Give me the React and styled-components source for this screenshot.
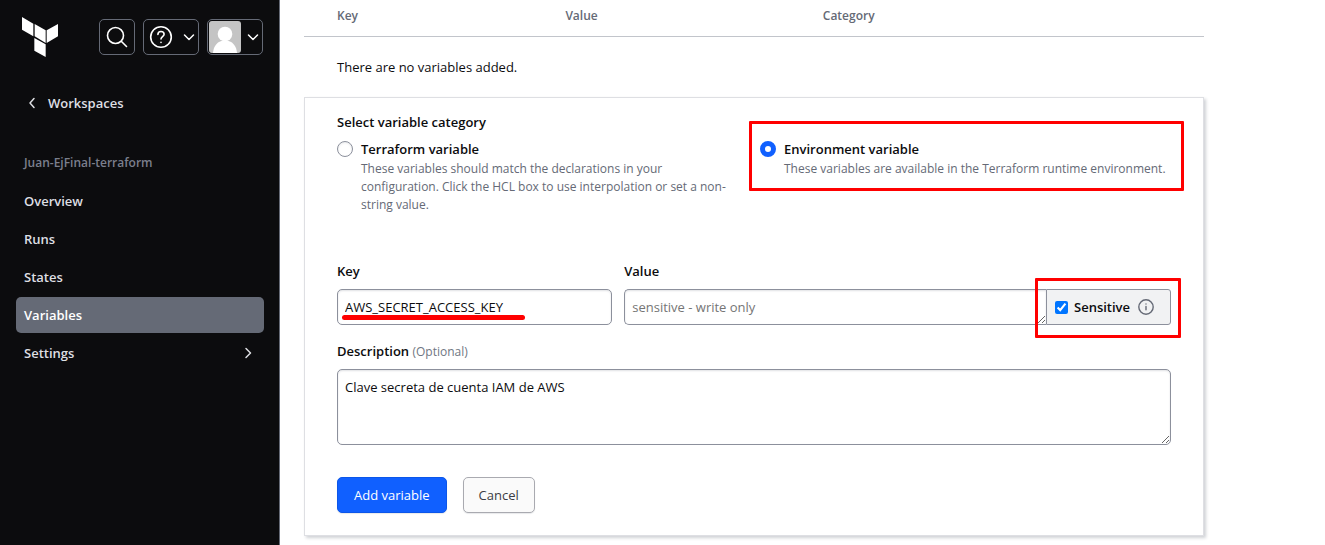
import React, { useState } from 'react';
import styled, { createGlobalStyle, css } from 'styled-components';

const GlobalStyle = createGlobalStyle`
  *, *::before, *::after { box-sizing: border-box; }
  body {
    margin: 0;
    background: #fff;
    color: #0c0c0e;
    font: 400 13px/20px "Open Sans", "Noto Sans", sans-serif;
  }
  button, input, textarea { font: inherit; color: inherit; }
`;

const Page = styled.div`
  display: flex;
  min-height: 100vh;
`;

const Sidebar = styled.aside`
  flex: none;
  width: 280px;
  padding: 17px 15px 17px 16px;
  border-right: 1px solid #656a76;
  background: #0c0c0e;
  color: #dedfe3;
`;

const SidebarHeader = styled.header`
  display: flex;
  align-items: center;
  gap: 8px;
  height: 40px;
  padding-right: 1px;
`;

const LogoLink = styled.a`
  display: flex;
  margin: 0 auto 0 6px;
`;

const HeaderButton = styled.button`
  display: flex;
  align-items: center;
  justify-content: space-between;
  width: ${({ $wide }) => ($wide ? 56 : 36)}px;
  height: 36px;
  padding: 0 ${({ $wide }) => ($wide ? 1 : 5)}px 0 ${({ $flush }) => ($flush ? 1 : 5)}px;
  border: 1px solid #656a76;
  border-radius: 5px;
  background: transparent;
  color: #fff;
`;

const BackLink = styled.a`
  display: flex;
  align-items: center;
  gap: 8px;
  height: 36px;
  margin-top: 28px;
  padding-left: 8px;
  color: inherit;
  font-weight: 600;
  text-decoration: none;
`;

const WorkspaceName = styled.div`
  margin: 32px 0 10px;
  padding-left: 8px;
  color: #7b7f8d;
  font-size: 12px;
  font-weight: 600;
`;

const Nav = styled.nav`
  display: flex;
  flex-direction: column;
  gap: 2px;
`;

const NavLink = styled.a`
  display: flex;
  align-items: center;
  justify-content: space-between;
  height: 36px;
  padding: 0 8px;
  border-radius: 5px;
  color: ${({ $active }) => ($active ? '#fff' : 'inherit')};
  background: ${({ $active }) => ($active ? '#656a76' : 'transparent')};
  font-weight: 600;
  text-decoration: none;
`;

const Main = styled.main`
  flex: 1;
  min-width: 0;
  padding: 0 24px 9px;
`;

const Content = styled.div`
  max-width: 900px;
`;

const VariablesTable = styled.table`
  width: 100%;
  border-collapse: collapse;
  table-layout: fixed;
`;

const HeadCell = styled.th`
  width: ${({ $width }) => $width};
  padding: 6px 0 10px ${({ $first }) => ($first ? 33 : 4)}px;
  border-bottom: 1px solid #c2c5cb;
  color: #656a76;
  font-size: 12px;
  font-weight: 600;
  text-align: left;
`;

const EmptyCell = styled.td`
  padding: 20px 33px;
`;

const Card = styled.form`
  padding: 14px 32px 22px;
  border: 1px solid #dedfe3;
  box-shadow: 2px 2px 3px rgba(101, 106, 118, 0.3);
`;

const CategoryGroup = styled.fieldset`
  display: grid;
  grid-template-columns: 1fr 1fr;
  column-gap: 12px;
  align-items: start;
  margin: 0 0 47px;
  padding: 0;
  border: 0;
`;

const Legend = styled.legend`
  margin-bottom: 7px;
  padding: 0;
  font-weight: 600;
`;

const Option = styled.label`
  position: relative;
  display: flex;
  gap: 8px;
  padding-right: ${({ $inset }) => ($inset ? 8 : 0)}px;
`;

const Radio = styled.input`
  appearance: none;
  flex: none;
  width: 16px;
  height: 16px;
  margin: 2px 0 0;
  border: 1px solid #8c909c;
  border-radius: 50%;
  background: #fff;
  box-shadow: inset 0 1px 2px rgba(101, 106, 118, 0.15);
  &:checked {
    border: 5px solid #1060ff;
    box-shadow: none;
  }
`;

const OptionTitle = styled.span`
  display: block;
  font-weight: 600;
`;

const OptionHelp = styled.span`
  display: block;
  margin-top: 1px;
  color: #656a76;
  font-size: 12px;
  line-height: 18px;
`;

const FieldRow = styled.div`
  display: grid;
  grid-template-columns: 33% 1fr;
  gap: 12px;
  margin-bottom: 16px;
`;

const Field = styled.div`
  position: relative;
  display: flex;
  flex-direction: column;
  gap: 8px;
  min-width: 0;
`;

const Label = styled.label`
  font-weight: 600;
`;

const Optional = styled.span`
  color: #6f7682;
  font-size: 12px;
  font-weight: 400;
  line-height: 16px;
`;

const control = css`
  display: block;
  width: 100%;
  margin: 0;
  padding: 7px;
  border: 1px solid #8c909c;
  border-radius: 5px;
  outline: 0;
  background: #fff;
  box-shadow: inset 0 1px 2px rgba(101, 106, 118, 0.2);
`;

const TextInput = styled.input`
  ${control}
  height: 36px;
`;

const TextArea = styled.textarea`
  ${control}
  height: ${({ $tall }) => ($tall ? 76 : 36)}px;
  ${({ $joined }) => $joined && 'border-right: 0; border-radius: 5px 0 0 5px; overflow: hidden;'}
  &::placeholder { color: #757575; }
`;

const InputGroup = styled.div`
  display: flex;
`;

const Addon = styled.div`
  position: relative;
  display: flex;
  flex: none;
  align-items: center;
  gap: 8px;
  width: 125px;
  height: 36px;
  padding-left: 8px;
  border: 1px solid #8c909c;
  border-radius: 0 3px 3px 0;
  background: #f1f2f3;
`;

const CheckLabel = styled.label`
  display: flex;
  align-items: center;
  gap: 6px;
  font-weight: 600;
`;

const Checkbox = styled.input`
  width: 13px;
  height: 13px;
  margin: 0;
  accent-color: #0075ff;
`;

const InfoButton = styled.button`
  display: flex;
  padding: 0;
  border: 0;
  background: none;
  color: #656a76;
`;

const Highlight = styled.span`
  position: absolute;
  inset: ${({ $inset }) => $inset};
  border: 3px solid #f00;
  border-radius: 1px;
  pointer-events: none;
`;

const Underline = styled.span`
  position: absolute;
  bottom: 5px;
  left: 5px;
  width: 183px;
  height: 5px;
  border-radius: 3px;
  background: #f00;
  pointer-events: none;
`;

const Actions = styled.div`
  display: flex;
  gap: 16px;
  margin-top: 32px;
`;

const Button = styled.button`
  height: 36px;
  padding: 0 ${({ $primary }) => ($primary ? 16 : 15)}px;
  border: 1px solid ${({ $primary }) => ($primary ? '#0c56e9' : '#a9aab0')};
  border-radius: 5px;
  background: ${({ $primary }) => ($primary ? '#1060ff' : '#fafafa')};
  color: ${({ $primary }) => ($primary ? '#fff' : '#3b3d45')};
  box-shadow: 0 1px 1px rgba(101, 106, 118, 0.15);
`;

const Stroke = ({ size = 24, box = 24, width = 2, children }) => (
  <svg width={size} height={size} viewBox={`0 0 ${box} ${box}`} fill="none" stroke="currentColor"
    strokeWidth={width} strokeLinecap="round" strokeLinejoin="round" aria-hidden="true">
    {children}
  </svg>
);

const CHEVRONS = {
  down: 'M3.500 6 8 10.500 12.500 6',
  left: 'M10 3.500 6 8l4 4.500',
  right: 'M6 3.500 10.500 8 6 12.500',
};

const Chevron = ({ dir = 'down' }) => (
  <Stroke size={16} box={16} width={1.5}>
    <path d={CHEVRONS[dir]} />
  </Stroke>
);

const Logo = () => (
  <svg width="36" height="40" viewBox="66 51 108 120" fill="#fff" aria-hidden="true">
    <path d="M66 51l34 20v38L66 89zM104 72l33 19v38l-33-20zM140 91l34-19v37l-34 20zM103 114l34 19v38l-34-19z" />
  </svg>
);

const Avatar = () => (
  <svg width="32" height="32" viewBox="0 0 32 32" aria-hidden="true">
    <rect width="32" height="32" rx="3" fill="#c4c4c4" />
    <circle cx="16" cy="13" r="7.300" fill="#fff" />
    <path d="M4 32c.5-7 4.500-12.500 12-12.500S27.500 25 28 32z" fill="#fff" />
  </svg>
);

const NAV = ['Overview', 'Runs', 'States', 'Variables', 'Settings'];

export default function App() {
  const [category, setCategory] = useState('env');
  const [sensitive, setSensitive] = useState(true);

  return (
    <>
      <GlobalStyle />
      <Page>
        <Sidebar>
          <SidebarHeader>
            <LogoLink href="#" aria-label="Terraform"><Logo /></LogoLink>
            <HeaderButton type="button" aria-label="Search">
              <Stroke width={1.6}>
                <circle cx="10.500" cy="10.500" r="8" />
                <path d="M16.500 16.500 21.500 21.500" />
              </Stroke>
            </HeaderButton>
            <HeaderButton type="button" $wide aria-label="Help">
              <Stroke width={1.6}>
                <circle cx="12" cy="12" r="10.300" />
                <path d="M8.900 9.500c0-1.800 1.300-3 3.100-3s3.100 1.100 3.100 2.800c0 2.300-3.100 2.400-3.100 4.700M12 17.300v.2" />
              </Stroke>
              <Chevron />
            </HeaderButton>
            <HeaderButton type="button" $wide $flush aria-label="Account">
              <Avatar />
              <Chevron />
            </HeaderButton>
          </SidebarHeader>
          <BackLink href="#"><Chevron dir="left" />Workspaces</BackLink>
          <WorkspaceName>Juan-EjFinal-terraform</WorkspaceName>
          <Nav>
            {NAV.map((item) => (
              <NavLink key={item} href="#" $active={item === 'Variables'}>
                {item}
                {item === 'Settings' && <Chevron dir="right" />}
              </NavLink>
            ))}
          </Nav>
        </Sidebar>

        <Main>
          <Content>
            <VariablesTable>
              <thead>
                <tr>
                  <HeadCell scope="col" $first $width="28.600%">Key</HeadCell>
                  <HeadCell scope="col" $width="28.600%">Value</HeadCell>
                  <HeadCell scope="col">Category</HeadCell>
                </tr>
              </thead>
              <tbody>
                <tr><EmptyCell colSpan={3}>There are no variables added.</EmptyCell></tr>
              </tbody>
            </VariablesTable>

            <Card onSubmit={(e) => e.preventDefault()}>
              <CategoryGroup>
                <Legend>Select variable category</Legend>
                <Option $inset>
                  <Radio type="radio" name="category" checked={category === 'tf'} onChange={() => setCategory('tf')} />
                  <span>
                    <OptionTitle>Terraform variable</OptionTitle>
                    <OptionHelp>
                      These variables should match the declarations in your configuration. Click the HCL box to use interpolation or set a non-string value.
                    </OptionHelp>
                  </span>
                </Option>
                <Option>
                  <Radio type="radio" name="category" checked={category === 'env'} onChange={() => setCategory('env')} />
                  <span>
                    <OptionTitle>Environment variable</OptionTitle>
                    <OptionHelp>These variables are available in the Terraform runtime environment.</OptionHelp>
                  </span>
                  <Highlight $inset="-18px -13px -13px -11px" />
                </Option>
              </CategoryGroup>

              <FieldRow>
                <Field>
                  <Label htmlFor="key">Key</Label>
                  <TextInput id="key" type="text" defaultValue="AWS_SECRET_ACCESS_KEY" spellCheck={false} />
                  <Underline />
                </Field>
                <Field>
                  <Label htmlFor="value">Value</Label>
                  <InputGroup>
                    <TextArea id="value" $joined rows={1} placeholder="sensitive - write only" />
                    <Addon>
                      <CheckLabel>
                        <Checkbox type="checkbox" checked={sensitive} onChange={(e) => setSensitive(e.target.checked)} />
                        Sensitive
                      </CheckLabel>
                      <InfoButton type="button" aria-label="About sensitive values">
                        <Stroke size={16} box={16} width={1.4}>
                          <circle cx="8" cy="8" r="7.200" />
                          <path d="M8 7.500v3.300M8 4.900v.1" />
                        </Stroke>
                      </InfoButton>
                      <Highlight $inset="-12px -11px -14px -12px" />
                    </Addon>
                  </InputGroup>
                </Field>
              </FieldRow>

              <Field>
                <Label htmlFor="description">Description <Optional>(Optional)</Optional></Label>
                <TextArea id="description" $tall defaultValue="Clave secreta de cuenta IAM de AWS" spellCheck={false} />
              </Field>

              <Actions>
                <Button type="submit" $primary>Add variable</Button>
                <Button type="button">Cancel</Button>
              </Actions>
            </Card>
          </Content>
        </Main>
      </Page>
    </>
  );
}
